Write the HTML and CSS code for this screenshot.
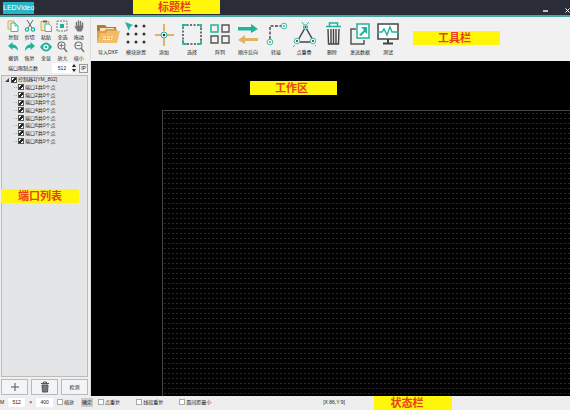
FILE: index.html
```html
<!DOCTYPE html>
<html lang="zh-CN">
<head>
    <meta charset="UTF-8">
    <meta name="viewport" content="width=device-width, initial-scale=1.0">
    <title>LEDVideo</title>
    <link rel="stylesheet" href="styles.css">
</head>
<body>
    <header class="titlebar">
        <span class="app-name">LEDVideo</span>
        <span class="callout callout-title">标题栏</span>
        <div class="window-buttons">
            <button type="button" aria-label="最小化"><svg width="5" height="5" viewBox="0 0 5 5"><path d="M0 3h5" stroke="#fff" stroke-width="1.4"/></svg></button>
            <button type="button" aria-label="关闭"><svg width="5" height="5" viewBox="0 0 5 5"><path d="M.5 .5l4 4M4.5 .5l-4 4" stroke="#fff"/></svg></button>
        </div>
    </header>

    <div class="main">
        <aside class="sidebar">
            <div class="edit-tools">
                <button type="button"><svg viewBox="0 0 12 12"><path d="M1 1h6v8H1z" fill="#f7e6c4" stroke="#dda84c"/><path d="M4 3h4l3 3v5.5H4z" fill="#fff" stroke="#3dbba6"/><path d="M8 3v3h3" fill="none" stroke="#3dbba6"/></svg>复制</button>
                <button type="button"><svg viewBox="0 0 12 12"><path d="M3 0l5 8M9 0L4 8" stroke="#666" fill="none"/><circle cx="3" cy="9.5" r="1.7" fill="none" stroke="#20b39b" stroke-width="1.2"/><circle cx="9" cy="9.5" r="1.7" fill="none" stroke="#20b39b" stroke-width="1.2"/></svg>剪切</button>
                <button type="button"><svg viewBox="0 0 12 12"><path d="M1 1.5h8v9H1z" fill="#f7e6c4" stroke="#dda84c"/><path d="M3 .5h4v2H3z" fill="#666"/><path d="M5 4h4l2.5 2.5v5H5z" fill="#fff" stroke="#3dbba6"/></svg>粘贴</button>
                <button type="button"><svg viewBox="0 0 12 12"><path d="M1 1h10v10H1z" fill="none" stroke="#777" stroke-dasharray="2 1"/><path d="M4 4h4v4H4z" fill="#20b39b"/></svg>全选</button>
                <button type="button"><svg viewBox="0 0 12 12"><path d="M3.5 7V2.5M5.5 6V1M7.5 6V1.5M9.5 7V3" stroke="#777" stroke-width="1.4" stroke-linecap="round"/><path d="M1 6l2 1V5.5h7.2V8L8.5 11.5h-4z" fill="#777"/></svg>拖动</button>
                <button type="button"><svg viewBox="0 0 12 12"><path d="M1 5l4.5-4v2.5C9 3.5 11 6 11 10 9.5 7.5 8 6.8 5.5 6.8V9z" fill="#20b39b"/></svg>撤销</button>
                <button type="button"><svg viewBox="0 0 12 12"><path d="M11 5L6.5 1v2.5C3 3.5 1 6 1 10 2.5 7.5 4 6.8 6.5 6.8V9z" fill="#20b39b"/></svg>恢复</button>
                <button type="button"><svg viewBox="0 0 12 12"><path d="M0 6q6-9 12 0-6 9-12 0z" fill="#20b39b"/><circle cx="6" cy="6" r="2.6" fill="#fff"/><circle cx="6" cy="6" r="1.3" fill="#20b39b"/></svg>全显</button>
                <button type="button"><svg viewBox="0 0 12 12"><circle cx="5.5" cy="4.5" r="3.5" fill="none" stroke="#777" stroke-width="1.2"/><path d="M8 7l3 4" stroke="#777" stroke-width="1.6"/><path d="M3.5 4.5h4M5.5 2.5v4" stroke="#777"/></svg>放大</button>
                <button type="button"><svg viewBox="0 0 12 12"><circle cx="5.5" cy="4.5" r="3.5" fill="none" stroke="#777" stroke-width="1.2"/><path d="M8 7l3 4" stroke="#777" stroke-width="1.6"/><path d="M3.5 4.5h4" stroke="#777"/></svg>缩小</button>
            </div>

            <div class="port-limit">
                <label for="limit">端口限制点数</label>
                <input type="text" id="limit" value="512">
                <button type="button" class="spin" aria-label="调节"><svg width="4" height="8" viewBox="0 0 4 8"><path d="M2 0l2 3H0zM2 8l2-3H0z" fill="#222"/></svg></button>
                <button type="button" class="ip">IP</button>
            </div>

            <div class="port-panel">
                <div class="port-tree">
                    <label class="root"><svg width="4" height="4" viewBox="0 0 4 4"><path d="M4 0v4H0z" fill="#444"/></svg><input type="checkbox" checked>控制器1[YM_802]</label>
                    <label class="port"><input type="checkbox" checked>端口1共0个点</label>
                    <label class="port"><input type="checkbox" checked>端口2共0个点</label>
                    <label class="port"><input type="checkbox" checked>端口3共0个点</label>
                    <label class="port"><input type="checkbox" checked>端口4共0个点</label>
                    <label class="port"><input type="checkbox" checked>端口5共0个点</label>
                    <label class="port"><input type="checkbox" checked>端口6共0个点</label>
                    <label class="port"><input type="checkbox" checked>端口7共0个点</label>
                    <label class="port"><input type="checkbox" checked>端口8共0个点</label>
                </div>
            </div>
            <span class="callout callout-ports">端口列表</span>

            <div class="port-actions">
                <button type="button" aria-label="添加"><svg width="10" height="10" viewBox="0 0 10 10"><path d="M1 5h8M5 1v8" stroke="#555"/></svg></button>
                <button type="button" aria-label="删除"><svg width="10" height="12" viewBox="0 0 10 12"><path d="M1 2.5h8M3.5 2V1h3v1" fill="none" stroke="#555"/><path d="M2 4h6l-.5 7h-5z" fill="#777" stroke="#555"/></svg></button>
                <button type="button">检测</button>
            </div>
        </aside>

        <div class="content">
            <nav class="toolbar">
                <button type="button"><svg viewBox="0 0 24 26"><path d="M1 4h8l2 2h9v6H1z" fill="#b9782f"/><path d="M4 7h14v6H4z" fill="#f7e4b8"/><path d="M1 22V10h7l2-2h11v14z" fill="#dfa04b"/><path d="M1 22l3-10h6l2-2h12l-3 12z" fill="#f3bd68"/><path d="M7 16h10M7 18.5h9" stroke="#fff0cc" stroke-dasharray="3 1"/></svg>导入DXF</button>
                <button type="button"><svg viewBox="0 0 24 26"><g fill="#333"><circle cx="12" cy="5" r="1.5"/><circle cx="20" cy="5" r="1.5"/><circle cx="4" cy="13" r="1.5"/><circle cx="12" cy="13" r="1.5"/><circle cx="20" cy="13" r="1.5"/><circle cx="4" cy="21" r="1.5"/><circle cx="12" cy="21" r="1.5"/><circle cx="20" cy="21" r="1.5"/></g><path d="M1 1l8 3-3 2-1 4z" fill="#20b39b"/></svg>模块放置</button>
                <button type="button"><svg viewBox="0 0 24 26"><path d="M12 3v7M12 17v8M3 14h6M15 14h7" stroke="#e3b365" stroke-width="2"/><circle cx="12" cy="14" r="3" fill="#fff" stroke="#20b39b"/><circle cx="12" cy="14" r="1.3" fill="#333"/></svg>添加</button>
                <button type="button"><svg viewBox="0 0 24 26"><path d="M3 4h18v19H3z" fill="none" stroke="#444" stroke-width="1.5" stroke-dasharray="2 1.5"/><path d="M3 8V4h4M17 4h4v4M21 19v4h-4M7 23H3v-4" fill="none" stroke="#20b39b" stroke-width="1.6"/></svg>选择</button>
                <button type="button"><svg viewBox="0 0 24 26"><path d="M3 4h7v7H3z" fill="none" stroke="#20b39b" stroke-width="1.5"/><path d="M14 4h7v7h-7zM3 15h7v7H3zM14 15h7v7h-7z" fill="none" stroke="#555" stroke-width="1.4"/></svg>阵列</button>
                <button type="button"><svg viewBox="0 0 24 26"><path d="M2 6h13V3l7 5-7 4V9.5H2z" fill="#20b39b"/><path d="M22 17H9v-3l-7 5 7 4v-3h13z" fill="#e3b365"/></svg>顺序反向</button>
                <button type="button"><svg viewBox="0 0 24 26"><path d="M6 18V5h11" fill="none" stroke="#444" stroke-width="1.4" stroke-dasharray="3 1.5"/><g fill="#fff" stroke="#3dbba6"><circle cx="20" cy="5" r="2.8"/><circle cx="6" cy="21" r="2.8"/></g><g fill="#20b39b"><circle cx="20" cy="5" r="1"/><circle cx="6" cy="21" r="1"/></g></svg>转接</button>
                <button type="button"><svg viewBox="0 0 24 26"><path d="M13 7L5 21M14 7l8 14M7 21h13" fill="none" stroke="#444" stroke-width="1.5"/><path d="M10 1l3 4 4-4" fill="none" stroke="#3dbba6"/><g fill="#e3fff9" stroke="#3dbba6"><circle cx="13.5" cy="6" r="2.2"/><circle cx="5" cy="20" r="2.8"/><circle cx="21" cy="20" r="2.8"/></g><g fill="#333"><circle cx="13.5" cy="6" r="1"/><circle cx="5" cy="20" r="1"/><circle cx="21" cy="20" r="1"/></g><path d="M3 24l-2 2M23 24l2 2" stroke="#3dbba6"/></svg>点重叠</button>
                <button type="button"><svg viewBox="0 0 24 26"><path d="M9.500 5V2h8v3M6 5.500h15" fill="none" stroke="#20b39b" stroke-width="1.5"/><path d="M8 8l.5 15h10L19 8M11 8v15M13.500 8v15M16 8v15" fill="none" stroke="#444" stroke-width="1.4"/></svg>删除</button>
                <button type="button"><svg viewBox="0 0 24 26"><path d="M8 8H3v15h13v-4" fill="none" stroke="#555" stroke-width="1.5"/><path d="M9 3h12v14H9z" fill="#fff" stroke="#20b39b" stroke-width="1.5"/><path d="M11 14l5-5-3-3h6v7l-2-2-4 4z" fill="#20b39b"/></svg>发送数据</button>
                <button type="button"><svg viewBox="0 0 24 26"><path d="M2 3h20v15H2z" fill="#fff" stroke="#444" stroke-width="1.5"/><path d="M12 18v4M7 22.5h10" stroke="#444" stroke-width="2"/><path d="M1 11h5l2-3 3 6 3-8 2 5h7" fill="none" stroke="#20b39b" stroke-width="1.4"/></svg>测试</button>
                <span class="callout callout-toolbar">工具栏</span>
            </nav>
            <main class="workspace">
                <div class="dot-grid"></div>
                <span class="callout callout-work">工作区</span>
            </main>
        </div>
    </div>

    <footer class="statusbar">
        <div class="size-fields">
            <label for="w">M</label>
            <input type="text" id="w" value="512">
            <label for="h">×</label>
            <input type="text" id="h" value="400">
            <label class="check"><input type="checkbox">缩放</label>
            <button type="button">确定</button>
        </div>
        <div class="checks">
            <label class="check"><input type="checkbox">点重复</label>
            <label class="check"><input type="checkbox">线段重复</label>
            <label class="check"><input type="checkbox">面间距最小</label>
        </div>
        <span class="coords">[X:86,Y:9]</span>
        <span class="callout callout-status">状态栏</span>
    </footer>
</body>
</html>
```
FILE: styles.css
```css
* {
    box-sizing: border-box;
}

body {
    margin: 0;
    height: 100vh;
    display: flex;
    flex-direction: column;
    overflow: hidden;
    background: #f0f0f0;
    color: #222;
    font-family: "Liberation Sans", "Noto Sans CJK SC", sans-serif;
    font-size: 5px;
    line-height: 7px;
}

button,
input {
    margin: 0;
    padding: 0;
    border: none;
    background: none;
    color: inherit;
    font: inherit;
}

svg {
    display: block;
    flex: none;
}

input[type="checkbox"] {
    appearance: none;
    flex: none;
    width: 6px;
    height: 6px;
    border: 1px solid #aaa;
    background: #fff;
}

input[type="checkbox"]:checked {
    border-color: #555;
    background: linear-gradient(135deg, #fff 35%, #222 35%, #222 65%, #fff 65%);
}

/* yellow area labels */
.callout {
    position: absolute;
    width: 87px;
    height: 14px;
    padding-right: 4px;
    background: #fff60a;
    color: #e8401c;
    font-size: 11px;
    font-weight: bold;
    line-height: 14px;
    text-align: center;
}

.callout-title {
    left: 133px;
    top: 0;
}

.callout-toolbar {
    left: 322px;
    top: 14px;
}

.callout-work {
    left: 159px;
    top: 20px;
}

.callout-ports {
    left: 1px;
    top: 172px;
    width: 78px;
    padding-right: 0;
}

.callout-status {
    left: 374px;
    top: 0;
    width: 78px;
    padding-right: 12px;
}

/* title bar */
.titlebar {
    position: relative;
    display: flex;
    justify-content: space-between;
    height: 17px;
    padding: 2px 0 0 3px;
    background: #2a2d38;
    border-bottom: 2px solid #47a99f;
}

.app-name {
    height: 12px;
    background: #25b5c4;
    color: #fff;
    font-size: 7px;
    line-height: 12px;
}

.window-buttons {
    display: flex;
    align-items: center;
    gap: 17px;
    padding-top: 4px;
}

.main {
    flex: 1;
    display: flex;
    min-height: 0;
}

/* sidebar */
.sidebar {
    position: relative;
    display: flex;
    flex-direction: column;
    width: 91px;
    padding: 3px 2px 1px 1px;
    border-right: 1px solid #ddd;
}

.edit-tools {
    display: grid;
    grid-template-columns: repeat(5, 1fr);
    padding: 0 1px 0 4px;
}

.edit-tools button {
    display: flex;
    flex-direction: column;
    align-items: center;
    gap: 2px;
    height: 21px;
}

.edit-tools svg {
    width: 12px;
    height: 12px;
}

.port-limit {
    display: flex;
    align-items: center;
    height: 12px;
    margin-bottom: 1px;
    padding-left: 7px;
}

.port-limit input {
    width: 20px;
    height: 10px;
    margin-left: 14px;
    background: #fff;
    text-align: center;
}

.spin {
    width: 6px;
}

.ip {
    width: 9px;
    height: 9px;
    margin-left: auto;
    border: 1px solid #999;
}

.port-panel {
    flex: 1;
    min-height: 0;
    border: 1px solid #bbb;
    background: #e4e5e7;
}

.port-tree {
    display: grid;
    grid-auto-rows: 1fr;
    height: 69px;
}

.port-tree label {
    display: flex;
    align-items: center;
    gap: 1px;
    white-space: nowrap;
}

.root {
    padding-left: 3px;
}

.root svg {
    margin-right: 1px;
}

.port {
    margin-left: 12px;
}

.port::before {
    content: "";
    width: 3px;
    border-top: 1px dotted #aaa;
}

.port-actions {
    display: grid;
    grid-template-columns: repeat(3, 1fr);
    gap: 3px;
    height: 16px;
    margin-top: 2px;
}

.port-actions button {
    display: flex;
    align-items: center;
    justify-content: center;
    border: 1px solid #b4bac2;
    background: #f3f4f6;
}

/* toolbar and workspace */
.content {
    flex: 1;
    display: flex;
    flex-direction: column;
    min-width: 0;
}

.toolbar {
    position: relative;
    display: flex;
    height: 44px;
    padding: 4px 0 0 3px;
    background: #f1f1f2;
}

.toolbar button {
    display: flex;
    flex-direction: column;
    align-items: center;
    gap: 2px;
    width: 28px;
    white-space: nowrap;
}

.toolbar svg {
    width: 24px;
    height: 26px;
}

.workspace {
    position: relative;
    flex: 1;
    display: flex;
    padding: 49px 0 0 71px;
    background: #000;
}

.dot-grid {
    flex: 1;
    border: 1px solid #444;
    border-width: 1px 0 0 1px;
    background: radial-gradient(circle, #333 0, #1c1c1c 1px, transparent 1px) 0 0 / 4px 5px;
}

/* status bar */
.statusbar {
    position: relative;
    display: flex;
    align-items: center;
    height: 15px;
    padding-bottom: 2px;
    border-bottom: 1px solid #fff;
    background: #efeeee;
    white-space: nowrap;
}

.size-fields,
.checks,
.check {
    display: flex;
    align-items: center;
}

.size-fields {
    gap: 4px;
}

.size-fields input[type="text"] {
    width: 17px;
    height: 9px;
    background: #fff;
    text-align: center;
}

.size-fields button {
    width: 12px;
    height: 9px;
    margin-left: 3px;
    background: #ccc;
}

.check {
    gap: 1px;
}

.checks {
    gap: 16px;
    margin-left: 5px;
}

.coords {
    margin-left: 112px;
}
```
